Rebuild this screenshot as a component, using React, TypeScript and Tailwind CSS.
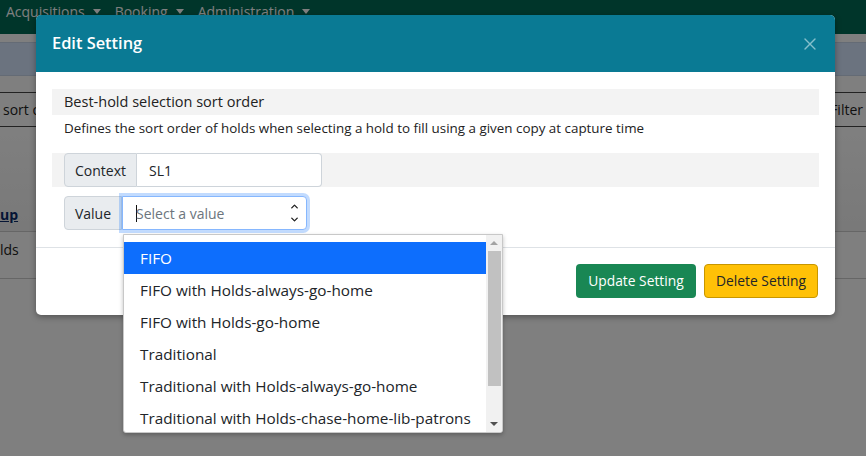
import { ChevronDown, ChevronUp, X } from 'lucide-react';

const OPTIONS = [
  'FIFO',
  'FIFO with Holds-always-go-home',
  'FIFO with Holds-go-home',
  'Traditional',
  'Traditional with Holds-always-go-home',
  'Traditional with Holds-chase-home-lib-patrons',
];

const FONT = { fontFamily: '"Open Sans", "Noto Sans", Arial, sans-serif' };

function NavMenu({ label }: { label: string }) {
  return (
    <span className="inline-flex items-center gap-2 mr-[14px]">
      {label}
      <span className="inline-block w-0 h-0 border-l-[4px] border-r-[4px] border-t-[5px] border-l-transparent border-r-transparent border-t-current" />
    </span>
  );
}

function BackPage() {
  return (
    <div className="flex flex-col h-[456px] bg-white text-[14px] text-[#222]">
      <div className="h-[34px] bg-[#006b55] text-white px-[6px] flex items-start pt-[1px] shrink-0">
        <NavMenu label="Acquisitions" />
        <NavMenu label="Booking" />
        <NavMenu label="Administration" />
      </div>
      <div className="h-[8px] shrink-0" />
      <div className="h-[34px] bg-[#d6e6fe] border-y border-[#c9d6ea] shrink-0" />
      <div className="h-[16px] shrink-0" />
      <div className="h-[35px] border-y border-[#444] flex items-center justify-between px-[3px] shrink-0">
        <span>sort o</span>
        <span>Filter</span>
      </div>
      <div className="h-[104px] bg-gradient-to-b from-white to-[#f2f2f2] flex items-end pb-[6px] shrink-0">
        <span className="font-bold text-[#0a2a6a] underline">up</span>
      </div>
      <div className="h-[48px] border-y border-[#ccc] flex items-center shrink-0">
        <span className="-mt-[12px]">lds</span>
      </div>
      <div className="flex-1" />
    </div>
  );
}

function Modal() {
  return (
    <div className="absolute left-[36px] top-[15px] w-[799px] h-[300px] bg-white rounded-[5px] overflow-hidden flex flex-col shadow-[0_2px_6px_rgba(0,0,0,0.35)]">
      <div className="h-[57px] bg-[#0a7a94] flex items-center justify-between pl-[16px] pr-[15px] shrink-0">
        <h5 className="text-white text-[16.4px] font-semibold">Edit Setting</h5>
        <X size={20} strokeWidth={1.6} className="text-[#85bfcc]" />
      </div>
      <div className="px-[16px] pt-[17px] pb-[17px] flex flex-col shrink-0">
        <div className="h-[26px] bg-[#f3f3f3] px-[12px] flex items-center text-[14.5px] font-medium text-[#222]">
          Best-hold selection sort order
        </div>
        <div className="h-[26px] px-[12px] flex items-center text-[13.4px] text-[#222]">
          Defines the sort order of holds when selecting a hold to fill using a given copy at capture time
        </div>
        <div className="h-[12px]" />
        <div className="h-[34px] bg-[#f3f3f3] px-[12px] flex items-stretch">
          <div className="w-[73px] bg-[#e9ecef] border border-[#ced4da] rounded-l-[4px] flex items-center justify-center text-[14px] text-[#212529]">
            Context
          </div>
          <div className="w-[185px] bg-white border border-l-0 border-[#ced4da] rounded-r-[4px] flex items-center px-[12px] text-[14px] text-[#212529]">
            SL1
          </div>
        </div>
        <div className="h-[9px]" />
        <div className="h-[34px] px-[12px] flex items-stretch">
          <div className="w-[58px] bg-[#e9ecef] border border-[#ced4da] rounded-l-[4px] flex items-center justify-center text-[14px] text-[#212529]">
            Value
          </div>
          <div className="w-[185px] bg-white border border-[#86b7fe] rounded-r-[4px] flex items-center justify-between pl-[13px] pr-[6px] shadow-[0_0_0_3px_rgba(13,110,253,0.25)] relative z-10">
            <span className="flex items-center text-[14px] text-[#6c757d]">
              <span className="w-px h-[17px] bg-[#111] -mr-px" />
              Select a value
            </span>
            <span className="flex flex-col items-center gap-[2px] text-[#222]">
              <ChevronUp size={11} strokeWidth={3} />
              <ChevronDown size={11} strokeWidth={3} />
            </span>
          </div>
        </div>
      </div>
      <div className="border-t border-[#dee2e6] flex-1 flex items-start justify-end gap-[8px] pt-[16px] pr-[17px]">
        <button className="h-[34px] w-[120px] rounded-[4px] bg-[#198754] text-white text-[13.8px]">
          Update Setting
        </button>
        <button className="h-[34px] w-[114px] rounded-[4px] bg-[#ffc107] border border-[#c79600] text-[#212529] text-[13.8px]">
          Delete Setting
        </button>
      </div>
    </div>
  );
}

function Dropdown() {
  return (
    <div className="absolute left-[123px] top-[234px] w-[380px] h-[199px] bg-white border border-[#c8c8c8] rounded-b-[3px] shadow-[0_2px_4px_rgba(0,0,0,0.25)] flex overflow-hidden">
      <div className="flex-1 flex flex-col pt-[7px]">
        {OPTIONS.map((opt, i) => (
          <div
            key={opt}
            className={
              'h-[32px] shrink-0 flex items-center pl-[16px] text-[15.3px] ' +
              (i === 0 ? 'bg-[#0d6efd] text-white' : 'text-[#212529]')
            }
          >
            {opt}
          </div>
        ))}
      </div>
      <div className="w-[16px] bg-[#f1f1f1] flex flex-col items-center shrink-0">
        <div className="h-[16px] flex items-center justify-center">
          <span className="w-0 h-0 border-l-[4px] border-r-[4px] border-b-[4px] border-l-transparent border-r-transparent border-b-[#a3a3a3]" />
        </div>
        <div className="w-[13px] h-[135px] bg-[#c1c1c1]" />
        <div className="flex-1" />
        <div className="h-[16px] flex items-center justify-center">
          <span className="w-0 h-0 border-l-[4px] border-r-[4px] border-t-[4px] border-l-transparent border-r-transparent border-t-[#505050]" />
        </div>
      </div>
    </div>
  );
}

export default function App() {
  return (
    <div className="relative w-[866px] h-[456px] overflow-hidden" style={FONT}>
      <BackPage />
      <div className="absolute inset-0 bg-black/50" />
      <Modal />
      <Dropdown />
    </div>
  );
}
